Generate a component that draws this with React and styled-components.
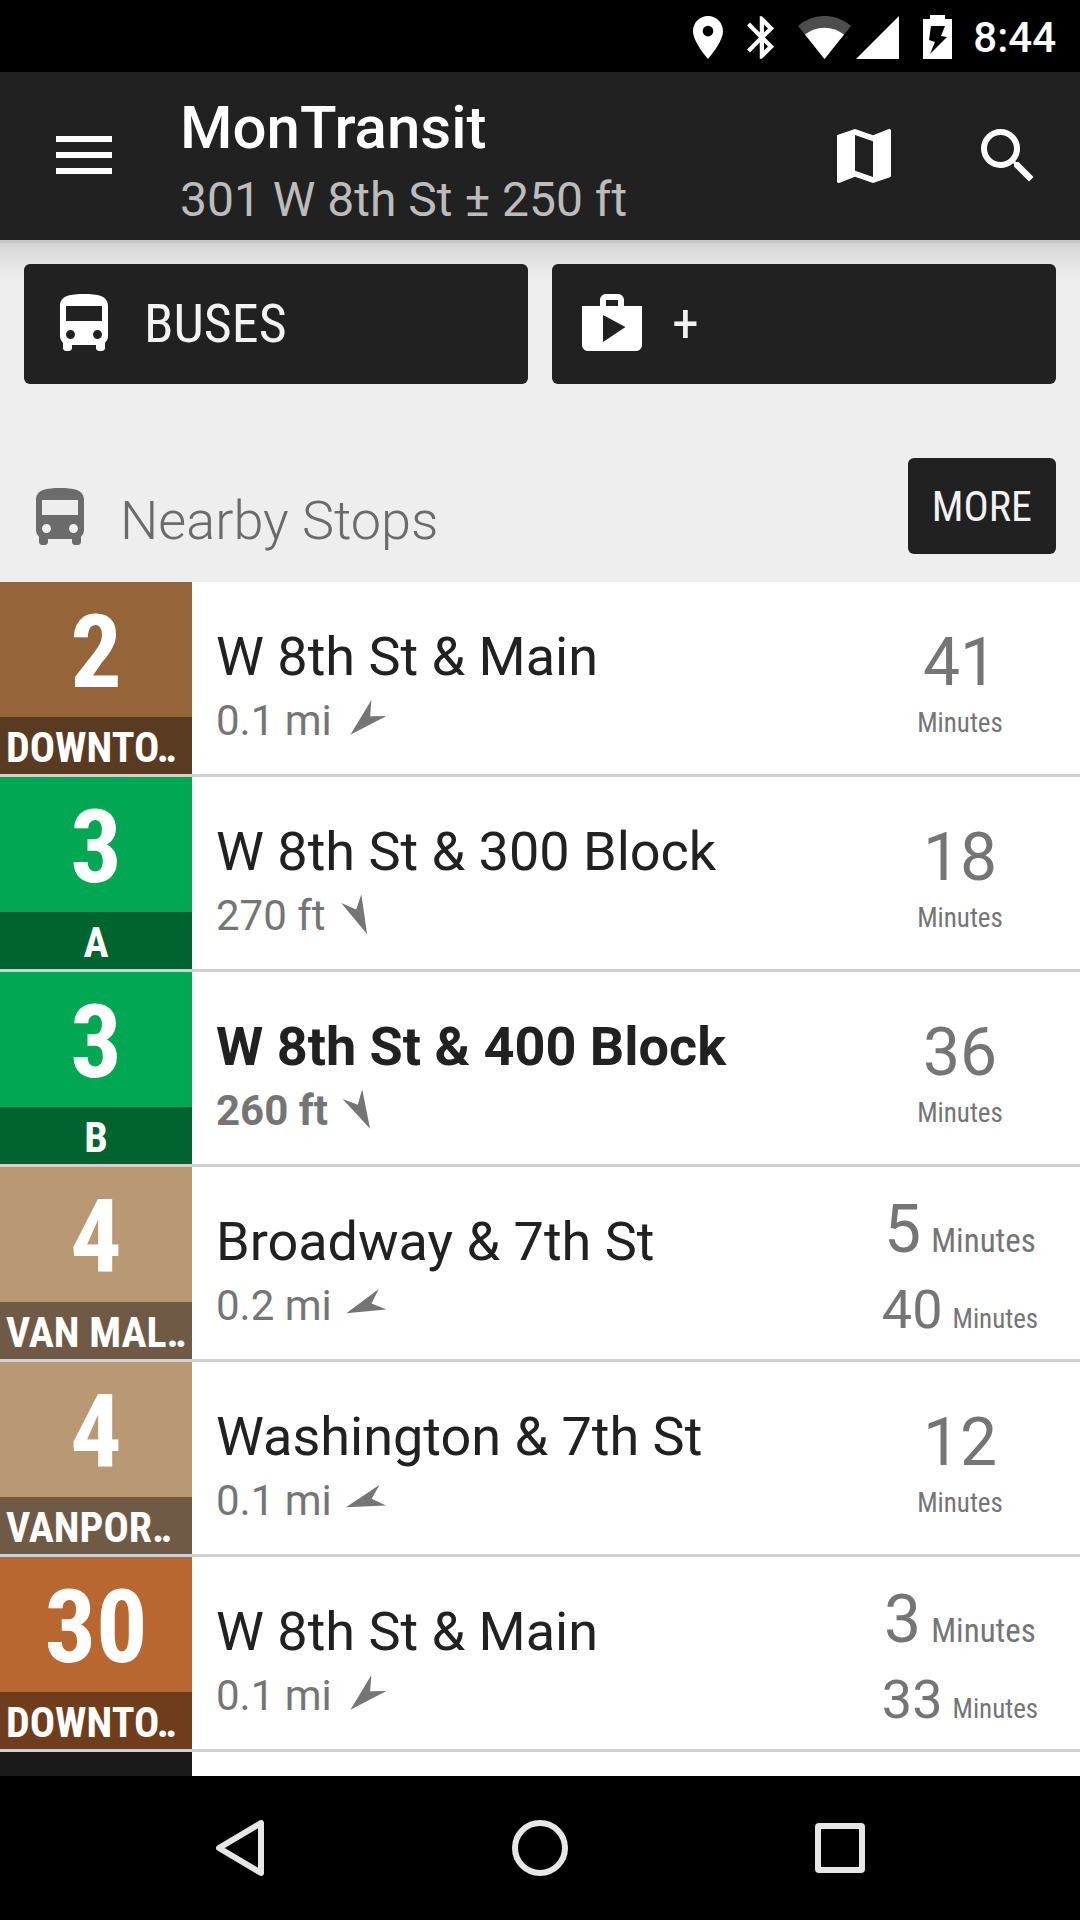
import React from "react";
import styled, { createGlobalStyle, css } from "styled-components";

const GlobalStyle = createGlobalStyle`
  *, *::before, *::after { box-sizing: border-box; }
  body { margin: 0; background: #000; font-family: Roboto, "Liberation Sans", sans-serif; }
  button { font: inherit; color: inherit; border: 0; padding: 0; background: none; cursor: pointer; }
  h1, h2, p, ul { margin: 0; padding: 0; }
  svg { display: block; flex: none; }
`;

const condensed = css`
  font-family: "Roboto Condensed", Roboto, "Liberation Sans Narrow", sans-serif;
`;

const Screen = styled.div`
  display: flex;
  flex-direction: column;
  height: 100vh;
  overflow: hidden;
  background: #eee;
`;

const StatusBar = styled.div`
  display: flex;
  flex: none;
  align-items: center;
  justify-content: flex-end;
  gap: 21px;
  height: 72px;
  padding: 2px 24px 0;
  background: #000;
  color: #fff;
`;

const StatusIcons = styled.div`
  display: flex;
  align-items: center;
  gap: 24px;
`;

const Radios = styled.div`
  display: flex;
  gap: 5px;
`;

const Clock = styled.time`
  padding-top: 2px;
  font-size: 42px;
  line-height: 50px;
  font-weight: 500;
`;

const Toolbar = styled.header`
  display: flex;
  flex: none;
  align-items: stretch;
  height: 168px;
  background: #212121;
  color: #fff;
`;

const ToolButton = styled.button`
  display: flex;
  align-items: center;
  justify-content: center;
  width: ${(p) => p.$width}px;
`;

const Titles = styled.div`
  flex: 1;
  min-width: 0;
  padding: 16px 0 0 12px;
  white-space: nowrap;
`;

const Title = styled.h1`
  font-size: 60px;
  line-height: 80px;
  font-weight: 500;
`;

const Subtitle = styled.p`
  font-size: 48px;
  line-height: 64px;
  color: #bcbcbc;
`;

const Content = styled.main`
  flex: 1;
  min-height: 0;
  overflow: hidden;
  background: linear-gradient(#c6c6c6 0, #c6c6c6 3px, #d3d3d3 3px, #e0e0e0 16px, #eee 39px);
`;

const Shortcuts = styled.nav`
  display: grid;
  grid-template-columns: 1fr 1fr;
  gap: 24px;
  padding: 24px 24px 0;
`;

const Shortcut = styled.button`
  ${condensed}
  display: flex;
  align-items: center;
  gap: 24px;
  height: 120px;
  padding: 0 24px;
  border-radius: 6px;
  background: #212121;
  color: #fff;
  font-size: 54px;
  line-height: 64px;
`;

const ShortcutText = styled.span`
  color: #f2f2f2;
`;

const SectionHeader = styled.div`
  display: flex;
  align-items: flex-end;
  gap: 24px;
  height: 198px;
  padding: 0 24px 28px;
  color: #6b6b6b;
`;

const SectionTitle = styled.h2`
  flex: 1;
  font-size: 54px;
  line-height: 66px;
  font-weight: 300;
`;

const MoreButton = styled.button`
  ${condensed}
  height: 96px;
  padding: 0 24px;
  border-radius: 6px;
  background: #212121;
  color: #f2f2f2;
  font-size: 42px;
`;

const StopList = styled.ul`
  list-style: none;
  background: #fff;
`;

const StopRow = styled.li`
  display: flex;
  height: 195px;
  border-bottom: 3px solid #d0d0d0;
`;

const Badge = styled.div`
  ${condensed}
  display: flex;
  flex: none;
  flex-direction: column;
  width: 192px;
  background: ${(p) => p.$color};
  color: #fff;
  font-weight: 700;
`;

const RouteNumber = styled.div`
  height: 135px;
  padding-top: 10px;
  font-size: 102px;
  line-height: 120px;
  text-align: center;
`;

const Direction = styled.div`
  height: 57px;
  padding: 6px 6px 0;
  overflow: hidden;
  background: ${(p) => p.$color};
  font-size: 42px;
  line-height: 50px;
  text-align: ${(p) => (p.$short ? "center" : "left")};
  white-space: nowrap;
`;

const StopInfo = styled.div`
  flex: 1;
  min-width: 0;
  padding: 39px 0 0 24px;
  font-weight: ${(p) => (p.$bold ? 700 : 400)};
  white-space: nowrap;
`;

const StopName = styled.div`
  overflow: hidden;
  text-overflow: ellipsis;
  color: #212121;
  font-size: 54px;
  line-height: 72px;
`;

const Distance = styled.div`
  display: flex;
  align-items: center;
  gap: 12px;
  color: #757575;
  font-size: 42px;
  line-height: 56px;
`;

const Times = styled.div`
  display: flex;
  flex: none;
  flex-direction: column;
  align-items: center;
  justify-content: center;
  width: 216px;
  padding: ${(p) => (p.$double ? 13 : 9)}px 24px 0 0;
  color: #757575;
`;

const Amount = styled.span`
  font-size: ${(p) => (p.$small ? 54 : 66)}px;
  line-height: 80px;
`;

const Unit = styled.span`
  ${condensed}
  font-size: ${(p) => (p.$large ? 33 : 27)}px;
  line-height: 40px;
`;

const TimeLine = styled.div`
  display: flex;
  align-items: baseline;
  gap: 10px;
`;

const SystemNav = styled.nav`
  display: flex;
  flex: none;
  justify-content: center;
  height: 144px;
  background: #000;
  color: #e6e6e6;
`;

const NavButton = styled.button`
  display: flex;
  flex: 0 1 300px;
  align-items: center;
  justify-content: center;
`;

function Icon({ d, size = 72 }) {
  return (
    <svg width={size} height={size} viewBox="0 0 24 24" fill="currentColor" aria-hidden="true">
      <path d={d} />
    </svg>
  );
}

const BUS =
  "M4 16c0 .88.39 1.67 1 2.22V20c0 .55.45 1 1 1h1c.55 0 1-.45 1-1v-1h8v1c0 .55.45 1 1 1h1c.55 0 1-.45 1-1v-1.78c.61-.55 1-1.34 1-2.22V6c0-3.5-3.58-4-8-4s-8 .5-8 4v10zm3.5 1c-.83 0-1.5-.67-1.5-1.5S6.67 14 7.5 14s1.5.67 1.5 1.5S8.33 17 7.5 17zm9 0c-.83 0-1.5-.67-1.5-1.5s.67-1.5 1.5-1.5 1.5.67 1.5 1.5-.67 1.5-1.5 1.5zm1.5-6H6V6h12v5z";
const SHOP =
  "M16 6V4c0-1.11-.89-2-2-2h-4c-1.11 0-2 .89-2 2v2H2v13c0 1.11.89 2 2 2h16c1.11 0 2-.89 2-2V6h-6zm-6-2h4v2h-4V4zM9 18V9l7.5 4L9 18z";
const MAP =
  "M20.5 3l-.16.03L15 5.1 9 3 3.36 4.9c-.21.07-.36.25-.36.48V20.500c0 .28.22.5.5.5l.16-.03L9 18.9l6 2.1 5.64-1.9c.21-.07.36-.25.36-.48V3.5c0-.28-.22-.5-.5-.5zM15 19l-6-2.11V5l6 2.11V19z";
const SEARCH =
  "M15.5 14h-.79l-.28-.27A6.471 6.471 0 0 0 16 9.5 6.5 6.5 0 1 0 9.5 16c1.61 0 3.09-.59 4.23-1.57l.27.28v.79l5 4.99L20.49 19l-4.99-5zm-6 0C7.01 14 5 11.99 5 9.5S7.01 5 9.5 5 14 7.01 14 9.5 11.99 14 9.5 14z";

function Compass({ angle }) {
  return (
    <svg width="42" height="42" viewBox="-21 -21 42 42" fill="currentColor" aria-hidden="true">
      <path transform={`rotate(${angle})`} d="M0-20L11 19 0 7-11 19z" />
    </svg>
  );
}

const brown = ["#956438", "#593b21"];
const green = ["#02a754", "#006430"];
const tan = ["#b99973", "#6f5b45"];
const orange = ["#b86730", "#6f3d1c"];

const stops = [
  { route: "2", direction: "DOWNTO‥", colors: brown, name: "W 8th St & Main", distance: "0.1 mi", angle: 227, times: ["41"] },
  { route: "3", direction: "A", colors: green, name: "W 8th St & 300 Block", distance: "270 ft", angle: 156, times: ["18"] },
  { route: "3", direction: "B", colors: green, name: "W 8th St & 400 Block", distance: "260 ft", angle: 153, times: ["36"], bold: true },
  { route: "4", direction: "VAN MAL‥", colors: tan, name: "Broadway & 7th St", distance: "0.2 mi", angle: 249, times: ["5", "40"] },
  { route: "4", direction: "VANPOR‥", colors: tan, name: "Washington & 7th St", distance: "0.1 mi", angle: 252, times: ["12"] },
  { route: "30", direction: "DOWNTO‥", colors: orange, name: "W 8th St & Main", distance: "0.1 mi", angle: 227, times: ["3", "33"] },
];

function Stop({ route, direction, colors, name, distance, angle, times, bold }) {
  return (
    <StopRow>
      <Badge $color={colors[0]}>
        <RouteNumber>{route}</RouteNumber>
        <Direction $color={colors[1]} $short={direction.length === 1}>{direction}</Direction>
      </Badge>
      <StopInfo $bold={bold}>
        <StopName>{name}</StopName>
        <Distance>
          {distance}
          <Compass angle={angle} />
        </Distance>
      </StopInfo>
      <Times $double={times.length > 1}>
        {times.length === 1 ? (
          <>
            <Amount>{times[0]}</Amount>
            <Unit>Minutes</Unit>
          </>
        ) : (
          times.map((time, i) => (
            <TimeLine key={time}>
              <Amount $small={i > 0}>{time}</Amount>
              <Unit $large={i === 0}>Minutes</Unit>
            </TimeLine>
          ))
        )}
      </Times>
    </StopRow>
  );
}

export default function App() {
  return (
    <Screen>
      <GlobalStyle />
      <StatusBar>
        <StatusIcons>
          <svg width="30" height="43" viewBox="5 2 14 20" fill="currentColor" aria-hidden="true">
            <path d="M12 2C8.130 2 5 5.130 5 9c0 5.250 7 13 7 13s7-7.750 7-13c0-3.870-3.130-7-7-7zm0 9.500a2.500 2.500 0 1 1 0-5 2.500 2.500 0 0 1 0 5z" />
          </svg>
          <svg width="27" height="43" viewBox="5 2 12.7 20" fill="currentColor" aria-hidden="true">
            <path d="M17.71 7.71L12 2h-1v7.59L6.41 5 5 6.41 10.59 12 5 17.59 6.41 19 11 14.41V22h1l5.71-5.71-4.3-4.29 4.3-4.29zM13 5.83l1.88 1.88L13 9.59V5.83zm1.88 10.46L13 18.17v-3.76l1.88 1.88z" />
          </svg>
          <Radios>
            <svg width="53" height="43" viewBox="0 0 53 43" aria-hidden="true">
              <path fill="#4d4d4d" d="M0 10A40 40 0 0 1 53 10L26.500 43z" />
              <path fill="#fff" d="M7 18.500A32 32 0 0 1 46 18.500L26.500 43z" />
            </svg>
            <svg width="43" height="43" viewBox="0 0 43 43" aria-hidden="true">
              <path fill="#fff" d="M43 0V43H0z" />
            </svg>
          </Radios>
          <svg width="29" height="44" viewBox="0 0 29 44" aria-hidden="true">
            <path fill="#fff" d="M7 0H22V4H29V44H0V4H7z" />
            <path fill="#000" d="M8 11H22L18 21 24 22 7 39 12 27 6 25z" />
          </svg>
        </StatusIcons>
        <Clock>8:44</Clock>
      </StatusBar>

      <Toolbar>
        <ToolButton $width={168} aria-label="Menu">
          <svg width="56" height="40" viewBox="0 0 56 40" fill="currentColor" aria-hidden="true">
            <path d="M0 0H56V6H0zM0 16H56V22H0zM0 32H56V38H0z" />
          </svg>
        </ToolButton>
        <Titles>
          <Title>MonTransit</Title>
          <Subtitle>301 W 8th St ± 250 ft</Subtitle>
        </Titles>
        <ToolButton $width={144} aria-label="Map">
          <Icon d={MAP} />
        </ToolButton>
        <ToolButton $width={144} aria-label="Search">
          <Icon d={SEARCH} />
        </ToolButton>
      </Toolbar>

      <Content>
        <Shortcuts>
          <Shortcut>
            <Icon d={BUS} />
            <ShortcutText>BUSES</ShortcutText>
          </Shortcut>
          <Shortcut>
            <Icon d={SHOP} />
            <ShortcutText>+</ShortcutText>
          </Shortcut>
        </Shortcuts>
        <SectionHeader>
          <Icon d={BUS} />
          <SectionTitle>Nearby Stops</SectionTitle>
          <MoreButton>MORE</MoreButton>
        </SectionHeader>
        <StopList>
          {stops.map((stop, i) => (
            <Stop key={i} {...stop} />
          ))}
          <StopRow>
            <Badge $color="#191919" />
          </StopRow>
        </StopList>
      </Content>

      <SystemNav>
        <NavButton aria-label="Back">
          <svg width="48" height="56" viewBox="0 0 48 56" aria-hidden="true">
            <path d="M45 3V53L3 28z" fill="none" stroke="currentColor" strokeWidth="6" strokeLinejoin="round" />
          </svg>
        </NavButton>
        <NavButton aria-label="Home">
          <svg width="56" height="56" viewBox="0 0 56 56" aria-hidden="true">
            <circle cx="28" cy="28" r="25" fill="none" stroke="currentColor" strokeWidth="6" />
          </svg>
        </NavButton>
        <NavButton aria-label="Recent apps">
          <svg width="50" height="50" viewBox="0 0 50 50" aria-hidden="true">
            <rect x="3" y="3" width="44" height="44" rx="1" fill="none" stroke="currentColor" strokeWidth="6" strokeLinejoin="round" />
          </svg>
        </NavButton>
      </SystemNav>
    </Screen>
  );
}
